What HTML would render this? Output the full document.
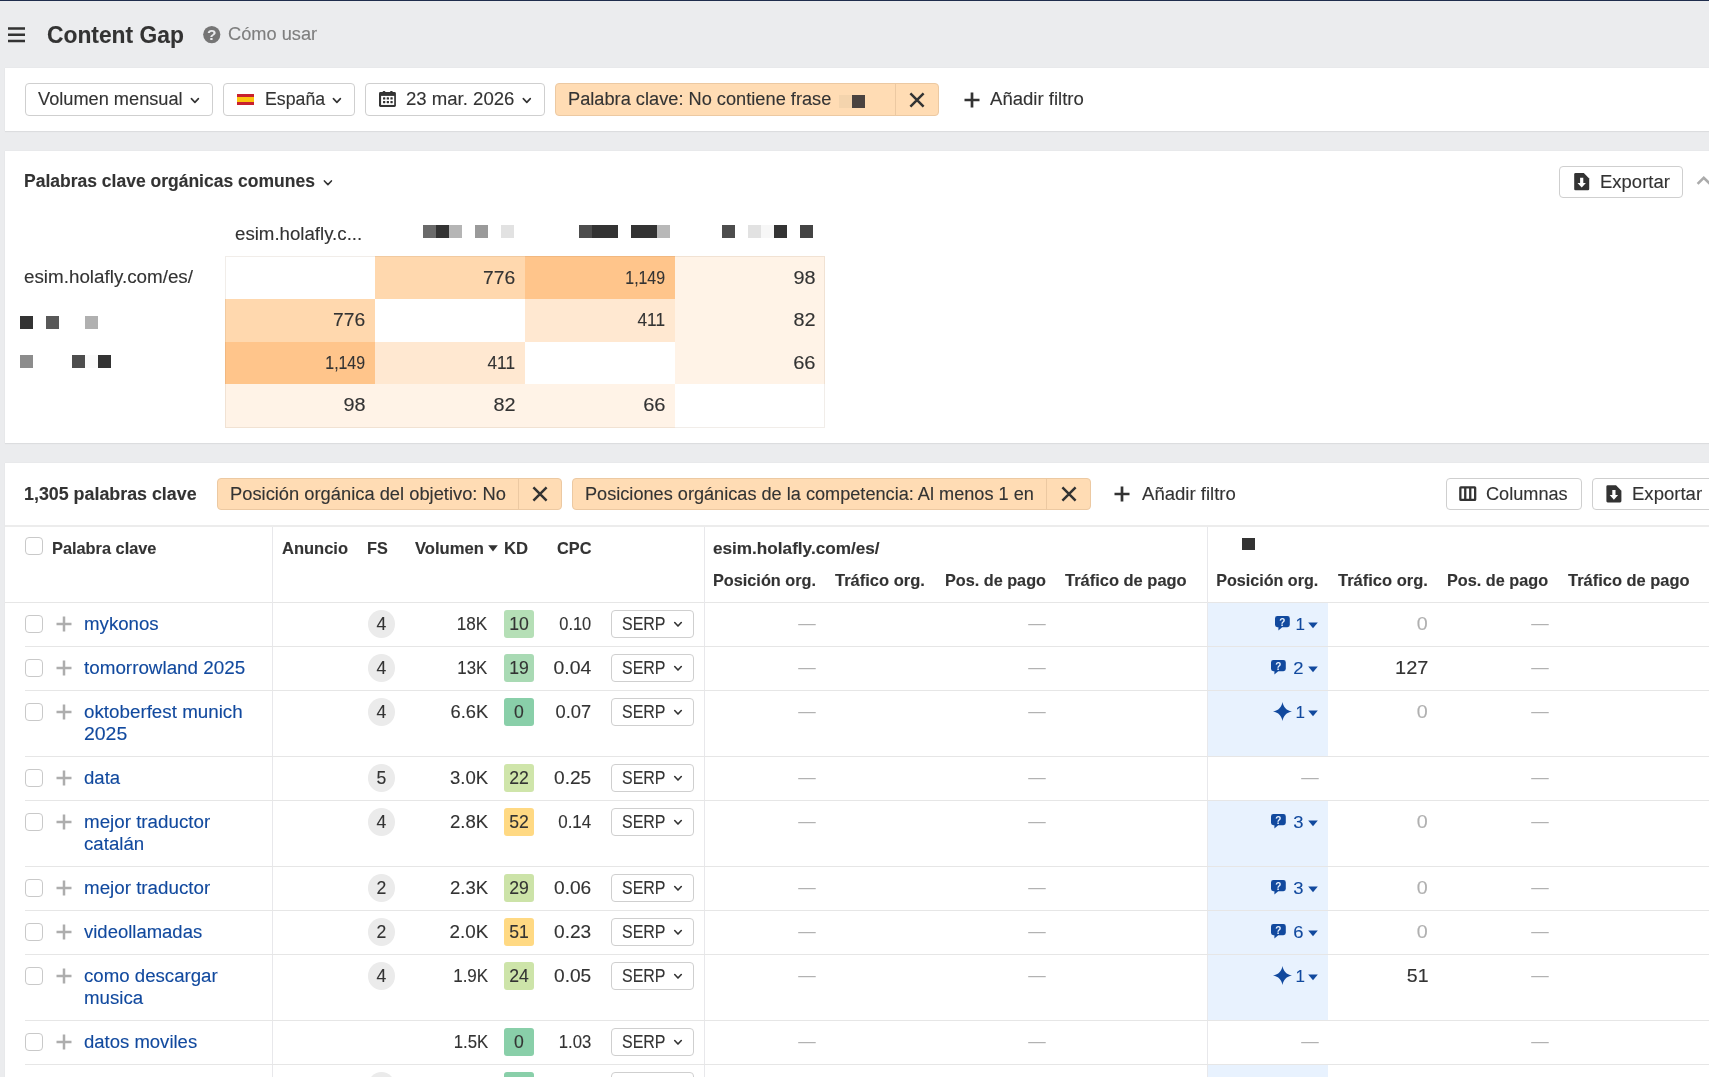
<!DOCTYPE html><html lang="es"><head><meta charset="utf-8"><title>Content Gap</title><style>html,body{margin:0;padding:0}body{width:1709px;height:1077px;overflow:hidden;position:relative;background:#ebecee;font-family:'Liberation Sans', sans-serif;}.t{position:absolute;white-space:nowrap;line-height:1;-webkit-text-stroke:0.12px currentColor;}#root{position:absolute;left:0;top:0;width:1709px;height:1077px;will-change:transform;}</style></head><body><div id="root">
<div style="position:absolute;left:0px;top:0px;width:1709px;height:1px;background:#1f2d4d;"></div>
<svg style="position:absolute;left:8px;top:26px" width="17" height="18" viewBox="0 0 17 18"><path d="M0 2.5 H17 M0 8.7 H17 M0 15 H17" stroke="#333" stroke-width="2.6" fill="none"/></svg>
<svg style="position:absolute;left:203px;top:26px" width="18" height="18" viewBox="0 0 18 18"><circle cx="8.75" cy="8.6" r="8.6" fill="#757575"/><text x="8.75" y="14.3" font-family="Liberation Sans, sans-serif" font-weight="700" font-size="15.5" fill="#ebecee" text-anchor="middle">?</text></svg>
<div style="position:absolute;left:5px;top:68px;width:1704px;height:63px;background:#fff;box-shadow:0 1px 1px rgba(0,0,0,0.055),0 0 1px rgba(0,0,0,0.07)"></div>
<div style="position:absolute;left:25px;top:83px;width:188px;height:33px;box-sizing:border-box;background:#fff;border:1px solid #cfcfcf;border-radius:4px"></div>
<svg style="position:absolute;left:188px;top:95px" width="12" height="10" viewBox="0 0 12 10"><path d="M3.40 3.65 L6.90 7.35 L10.40 3.65" fill="none" stroke="#333" stroke-width="1.6" stroke-linecap="round" stroke-linejoin="round"/></svg>
<div style="position:absolute;left:223px;top:83px;width:132px;height:33px;box-sizing:border-box;background:#fff;border:1px solid #cfcfcf;border-radius:4px"></div>
<div style="position:absolute;left:237px;top:94px;width:17px;height:3px;background:#c8202f;"></div>
<div style="position:absolute;left:237px;top:97px;width:17px;height:5px;background:#fbc40f;"></div>
<div style="position:absolute;left:237px;top:102px;width:17px;height:3px;background:#c8202f;"></div>
<svg style="position:absolute;left:330px;top:95px" width="12" height="10" viewBox="0 0 12 10"><path d="M3.40 3.65 L6.90 7.35 L10.40 3.65" fill="none" stroke="#333" stroke-width="1.6" stroke-linecap="round" stroke-linejoin="round"/></svg>
<div style="position:absolute;left:365px;top:83px;width:180px;height:33px;box-sizing:border-box;background:#fff;border:1px solid #cfcfcf;border-radius:4px"></div>
<svg style="position:absolute;left:379px;top:91px" width="17" height="17" viewBox="0 0 17 17"><path d="M1.4 1 H15.5 Q16.9 1 16.9 2.4 V14.5 Q16.9 15.9 15.5 15.9 H1.4 Q0 15.9 0 14.5 V2.4 Q0 1 1.4 1 Z" fill="#333"/><rect x="3.7" y="0" width="2.6" height="2" rx="0.8" fill="#333"/><rect x="11.1" y="0" width="2.6" height="2" rx="0.8" fill="#333"/><rect x="2.1" y="4.9" width="13.1" height="9.05" fill="#fff"/><g fill="#333"><rect x="4" y="6.3" width="2.3" height="2.3" rx="0.4"/><rect x="7.7" y="6.3" width="2.3" height="2.3" rx="0.4"/><rect x="11.4" y="6.3" width="2.3" height="2.3" rx="0.4"/><rect x="4" y="9.9" width="2.3" height="2.3" rx="0.4"/><rect x="7.7" y="9.9" width="2.3" height="2.3" rx="0.4"/><rect x="11.4" y="9.9" width="2.3" height="2.3" rx="0.4"/></g></svg>
<svg style="position:absolute;left:520px;top:95px" width="12" height="10" viewBox="0 0 12 10"><path d="M3.30 3.65 L6.80 7.35 L10.30 3.65" fill="none" stroke="#333" stroke-width="1.6" stroke-linecap="round" stroke-linejoin="round"/></svg>
<div style="position:absolute;left:555px;top:83px;width:384px;height:33px;box-sizing:border-box;background:#ffdcb4;border:1px solid #ecc9a2;border-radius:4px"></div>
<div style="position:absolute;left:895px;top:84px;width:1px;height:31px;background:#ecc9a2;"></div>
<div style="position:absolute;left:839px;top:94.5px;width:13px;height:13px;background:#f4d4ad;"></div>
<div style="position:absolute;left:852px;top:94.5px;width:13px;height:13px;background:#4a4340;"></div>
<svg style="position:absolute;left:907.8px;top:90.8px" width="18" height="18" viewBox="0 0 18 18"><path d="M2.4000000000000004 2.4000000000000004 L15.6 15.6 M15.6 2.4000000000000004 L2.4000000000000004 15.6" stroke="#333" stroke-width="2.5" stroke-linecap="butt" fill="none"/></svg>
<svg style="position:absolute;left:961.5px;top:89.5px" width="20" height="20" viewBox="0 0 20 20"><path d="M2.5 10 L17.5 10 M10 2.5 L10 17.5" stroke="#333" stroke-width="2.7" fill="none"/></svg>
<div style="position:absolute;left:5px;top:151px;width:1704px;height:292px;background:#fff;box-shadow:0 1px 1px rgba(0,0,0,0.055),0 0 1px rgba(0,0,0,0.07)"></div>
<svg style="position:absolute;left:321px;top:177px" width="12" height="10" viewBox="0 0 12 10"><path d="M3.40 3.95 L6.90 7.65 L10.40 3.95" fill="none" stroke="#333" stroke-width="1.6" stroke-linecap="round" stroke-linejoin="round"/></svg>
<div style="position:absolute;left:1559px;top:166px;width:124px;height:32px;box-sizing:border-box;background:#fff;border:1px solid #cfcfcf;border-radius:4px"></div>
<svg style="position:absolute;left:1574px;top:173px" width="17" height="19" viewBox="0 0 17 19"><g transform="translate(0.20,0.10)"><path d="M1.3 0 H9.6 L15 5.4 V15.8 Q15 17.1 13.7 17.1 H1.3 Q0 17.1 0 15.8 V1.3 Q0 0 1.3 0 Z" fill="#333"/><path d="M5.9 4.6 H9.1 V9.8 H11.7 L7.5 14.4 L3.3 9.8 H5.9 Z" fill="#fff"/></g></svg>
<svg style="position:absolute;left:1694px;top:174px" width="15" height="14" viewBox="0 0 15 14"><path d="M3.6 9.9 L9.75 3.8 L16 9.9" fill="none" stroke="#ababab" stroke-width="2.6"/></svg>
<div style="position:absolute;left:423px;top:225px;width:13px;height:13px;background:#6a6a6a;"></div>
<div style="position:absolute;left:436px;top:225px;width:13px;height:13px;background:#333;"></div>
<div style="position:absolute;left:449px;top:225px;width:13px;height:13px;background:#b5b5b5;"></div>
<div style="position:absolute;left:475px;top:225px;width:13px;height:13px;background:#9a9a9a;"></div>
<div style="position:absolute;left:501px;top:225px;width:13px;height:13px;background:#e2e2e2;"></div>
<div style="position:absolute;left:579px;top:225px;width:13px;height:13px;background:#4d4d4d;"></div>
<div style="position:absolute;left:592px;top:225px;width:13px;height:13px;background:#333;"></div>
<div style="position:absolute;left:605px;top:225px;width:13px;height:13px;background:#333;"></div>
<div style="position:absolute;left:631px;top:225px;width:13px;height:13px;background:#333;"></div>
<div style="position:absolute;left:644px;top:225px;width:13px;height:13px;background:#333;"></div>
<div style="position:absolute;left:657px;top:225px;width:13px;height:13px;background:#b8b8b8;"></div>
<div style="position:absolute;left:722px;top:225px;width:13px;height:13px;background:#4d4d4d;"></div>
<div style="position:absolute;left:748px;top:225px;width:13px;height:13px;background:#e2e2e2;"></div>
<div style="position:absolute;left:761px;top:225px;width:13px;height:13px;background:#f7f7f7;"></div>
<div style="position:absolute;left:774px;top:225px;width:13px;height:13px;background:#333;"></div>
<div style="position:absolute;left:800px;top:225px;width:13px;height:13px;background:#444;"></div>
<div style="position:absolute;left:20px;top:316px;width:13px;height:13px;background:#333;"></div>
<div style="position:absolute;left:46px;top:316px;width:13px;height:13px;background:#595959;"></div>
<div style="position:absolute;left:85px;top:316px;width:13px;height:13px;background:#b0b0b0;"></div>
<div style="position:absolute;left:20px;top:355px;width:13px;height:13px;background:#8c8c8c;"></div>
<div style="position:absolute;left:72px;top:355px;width:13px;height:13px;background:#4d4d4d;"></div>
<div style="position:absolute;left:85px;top:355px;width:13px;height:13px;background:#fafafa;"></div>
<div style="position:absolute;left:98px;top:355px;width:13px;height:13px;background:#333;"></div>
<div style="position:absolute;left:375px;top:256px;width:150px;height:43px;background:#ffd8ae;"></div>
<div style="position:absolute;left:525px;top:256px;width:150px;height:43px;background:#ffc58b;"></div>
<div style="position:absolute;left:675px;top:256px;width:150px;height:43px;background:#fff3e7;"></div>
<div style="position:absolute;left:225px;top:299px;width:150px;height:43px;background:#ffd8ae;"></div>
<div style="position:absolute;left:525px;top:299px;width:150px;height:43px;background:#ffe8d1;"></div>
<div style="position:absolute;left:675px;top:299px;width:150px;height:43px;background:#fff3e7;"></div>
<div style="position:absolute;left:225px;top:342px;width:150px;height:42px;background:#ffc58b;"></div>
<div style="position:absolute;left:375px;top:342px;width:150px;height:42px;background:#ffe8d1;"></div>
<div style="position:absolute;left:675px;top:342px;width:150px;height:42px;background:#fff3e7;"></div>
<div style="position:absolute;left:225px;top:384px;width:150px;height:43.5px;background:#fff3e7;"></div>
<div style="position:absolute;left:375px;top:384px;width:150px;height:43.5px;background:#fff3e7;"></div>
<div style="position:absolute;left:525px;top:384px;width:150px;height:43.5px;background:#fff3e7;"></div>
<div style="position:absolute;left:225px;top:256px;width:600px;height:171.5px;background:transparent;box-sizing:border-box;border:1px solid rgba(120,80,40,0.10)"></div>
<div style="position:absolute;left:5px;top:463px;width:1704px;height:614px;background:#fff;box-shadow:0 0 1px rgba(0,0,0,0.08)"></div>
<div style="position:absolute;left:217px;top:478px;width:345px;height:32px;box-sizing:border-box;background:#ffdcb4;border:1px solid #ecc9a2;border-radius:4px"></div>
<div style="position:absolute;left:518px;top:479px;width:1px;height:30px;background:#ecc9a2;"></div>
<svg style="position:absolute;left:531px;top:485px" width="18" height="18" viewBox="0 0 18 18"><path d="M2.4000000000000004 2.4000000000000004 L15.6 15.6 M15.6 2.4000000000000004 L2.4000000000000004 15.6" stroke="#333" stroke-width="2.5" stroke-linecap="butt" fill="none"/></svg>
<div style="position:absolute;left:572px;top:478px;width:519px;height:32px;box-sizing:border-box;background:#ffdcb4;border:1px solid #ecc9a2;border-radius:4px"></div>
<div style="position:absolute;left:1046px;top:479px;width:1px;height:30px;background:#ecc9a2;"></div>
<svg style="position:absolute;left:1059.6px;top:485px" width="18" height="18" viewBox="0 0 18 18"><path d="M2.4000000000000004 2.4000000000000004 L15.6 15.6 M15.6 2.4000000000000004 L2.4000000000000004 15.6" stroke="#333" stroke-width="2.5" stroke-linecap="butt" fill="none"/></svg>
<svg style="position:absolute;left:1112.3px;top:483.8px" width="20" height="20" viewBox="0 0 20 20"><path d="M2.5 10 L17.5 10 M10 2.5 L10 17.5" stroke="#333" stroke-width="2.7" fill="none"/></svg>
<div style="position:absolute;left:1446px;top:478px;width:136px;height:32px;box-sizing:border-box;background:#fff;border:1px solid #cfcfcf;border-radius:4px"></div>
<svg style="position:absolute;left:1459px;top:486px" width="18" height="16" viewBox="0 0 18 16"><rect x="1.35" y="1.35" width="14.8" height="12.6" rx="0.5" fill="none" stroke="#333" stroke-width="2.3"/><path d="M6.25 1 V14.5 M11.25 1 V14.5" stroke="#333" stroke-width="2.3"/></svg>
<div style="position:absolute;left:1592px;top:478px;width:130px;height:32px;box-sizing:border-box;background:#fff;border:1px solid #cfcfcf;border-radius:4px"></div>
<svg style="position:absolute;left:1606px;top:485px" width="17" height="19" viewBox="0 0 17 19"><g transform="translate(0.40,0.30)"><path d="M1.3 0 H9.6 L15 5.4 V15.8 Q15 17.1 13.7 17.1 H1.3 Q0 17.1 0 15.8 V1.3 Q0 0 1.3 0 Z" fill="#333"/><path d="M5.9 4.6 H9.1 V9.8 H11.7 L7.5 14.4 L3.3 9.8 H5.9 Z" fill="#fff"/></g></svg>
<div style="position:absolute;left:5px;top:525px;width:1704px;height:2px;background:#ececec;"></div>
<div style="position:absolute;left:5px;top:602px;width:1704px;height:1px;background:#e6e6e6;"></div>
<div style="position:absolute;left:272px;top:527px;width:1px;height:550px;background:#e8e8eb;"></div>
<div style="position:absolute;left:704px;top:527px;width:1px;height:550px;background:#e8e8eb;"></div>
<div style="position:absolute;left:1207px;top:527px;width:1px;height:550px;background:#e8e8eb;"></div>
<div style="position:absolute;left:25px;top:536.5px;width:18px;height:18px;box-sizing:border-box;background:#fff;border:1px solid #c9c9c9;border-radius:4px"></div>
<svg style="position:absolute;left:488px;top:544px" width="10" height="9" viewBox="0 0 10 9"><path d="M0.2 1.2 H9.8 L5 7.4 Z" fill="#333"/></svg>
<div style="position:absolute;left:1242px;top:538.4px;width:13px;height:11.5px;background:#333;"></div>
<div style="position:absolute;left:1208px;top:603px;width:120px;height:44px;background:#e8f2fe;"></div>
<div style="position:absolute;left:25px;top:646px;width:1684px;height:1px;background:#e6e6e6;"></div>
<div style="position:absolute;left:25px;top:615.0px;width:18px;height:18px;box-sizing:border-box;background:#fff;border:1px solid #c9c9c9;border-radius:4px"></div>
<svg style="position:absolute;left:53.5px;top:614.3px" width="20" height="20" viewBox="0 0 20 20"><path d="M2.5 10 L17.5 10 M10 2.5 L10 17.5" stroke="#adadad" stroke-width="2.5" fill="none"/></svg>
<div style="position:absolute;left:368px;top:610.2px;width:27px;height:27.5px;border-radius:50%;background:#ebebeb"></div>
<div style="position:absolute;left:504px;top:610px;width:30px;height:27.8px;border-radius:3px;background:#b5dfb6"></div>
<div style="position:absolute;left:611px;top:610.2px;width:83px;height:27.6px;box-sizing:border-box;background:#fff;border:1px solid #cfcfcf;border-radius:4px"></div>
<svg style="position:absolute;left:672px;top:619px" width="12" height="10" viewBox="0 0 12 10"><path d="M2.71 3.56 L6.00 7.04 L9.29 3.56" fill="none" stroke="#333" stroke-width="1.6" stroke-linecap="round" stroke-linejoin="round"/></svg>
<svg style="position:absolute;left:1308.2px;top:622.4px" width="10" height="7" viewBox="0 0 10 7"><path d="M0.2 0.5 H9.8 L5 6.2 Z" fill="#11499e"/></svg>
<svg style="position:absolute;left:1275.3px;top:615.8px" width="15" height="15" viewBox="0 0 15 15"><path d="M2.4 0 H12.4 Q14.8 0 14.8 2.4 V8.8 Q14.8 11.2 12.4 11.2 H7.2 L3.4 14.4 V11.2 H2.4 Q0 11.2 0 8.8 V2.4 Q0 0 2.4 0 Z" fill="#11499e"/><text x="7.4" y="9.7" font-family="Liberation Sans, sans-serif" font-weight="700" font-size="10" fill="#e8f2fe" text-anchor="middle">?</text></svg>
<div style="position:absolute;left:1208px;top:647px;width:120px;height:44px;background:#e8f2fe;"></div>
<div style="position:absolute;left:25px;top:690px;width:1684px;height:1px;background:#e6e6e6;"></div>
<div style="position:absolute;left:25px;top:659.0px;width:18px;height:18px;box-sizing:border-box;background:#fff;border:1px solid #c9c9c9;border-radius:4px"></div>
<svg style="position:absolute;left:53.5px;top:658.3px" width="20" height="20" viewBox="0 0 20 20"><path d="M2.5 10 L17.5 10 M10 2.5 L10 17.5" stroke="#adadad" stroke-width="2.5" fill="none"/></svg>
<div style="position:absolute;left:368px;top:654.2px;width:27px;height:27.5px;border-radius:50%;background:#ebebeb"></div>
<div style="position:absolute;left:504px;top:654px;width:30px;height:27.8px;border-radius:3px;background:#a9dab4"></div>
<div style="position:absolute;left:611px;top:654.2px;width:83px;height:27.6px;box-sizing:border-box;background:#fff;border:1px solid #cfcfcf;border-radius:4px"></div>
<svg style="position:absolute;left:672px;top:663px" width="12" height="10" viewBox="0 0 12 10"><path d="M2.71 3.56 L6.00 7.04 L9.29 3.56" fill="none" stroke="#333" stroke-width="1.6" stroke-linecap="round" stroke-linejoin="round"/></svg>
<svg style="position:absolute;left:1308.2px;top:666.4px" width="10" height="7" viewBox="0 0 10 7"><path d="M0.2 0.5 H9.8 L5 6.2 Z" fill="#11499e"/></svg>
<svg style="position:absolute;left:1271.3999999999999px;top:659.8px" width="15" height="15" viewBox="0 0 15 15"><path d="M2.4 0 H12.4 Q14.8 0 14.8 2.4 V8.8 Q14.8 11.2 12.4 11.2 H7.2 L3.4 14.4 V11.2 H2.4 Q0 11.2 0 8.8 V2.4 Q0 0 2.4 0 Z" fill="#11499e"/><text x="7.4" y="9.7" font-family="Liberation Sans, sans-serif" font-weight="700" font-size="10" fill="#e8f2fe" text-anchor="middle">?</text></svg>
<div style="position:absolute;left:1208px;top:691px;width:120px;height:66px;background:#e8f2fe;"></div>
<div style="position:absolute;left:25px;top:756px;width:1684px;height:1px;background:#e6e6e6;"></div>
<div style="position:absolute;left:25px;top:703.0px;width:18px;height:18px;box-sizing:border-box;background:#fff;border:1px solid #c9c9c9;border-radius:4px"></div>
<svg style="position:absolute;left:53.5px;top:702.3px" width="20" height="20" viewBox="0 0 20 20"><path d="M2.5 10 L17.5 10 M10 2.5 L10 17.5" stroke="#adadad" stroke-width="2.5" fill="none"/></svg>
<div style="position:absolute;left:368px;top:698.2px;width:27px;height:27.5px;border-radius:50%;background:#ebebeb"></div>
<div style="position:absolute;left:504px;top:698px;width:30px;height:27.8px;border-radius:3px;background:#89cfa9"></div>
<div style="position:absolute;left:611px;top:698.2px;width:83px;height:27.6px;box-sizing:border-box;background:#fff;border:1px solid #cfcfcf;border-radius:4px"></div>
<svg style="position:absolute;left:672px;top:707px" width="12" height="10" viewBox="0 0 12 10"><path d="M2.71 3.56 L6.00 7.04 L9.29 3.56" fill="none" stroke="#333" stroke-width="1.6" stroke-linecap="round" stroke-linejoin="round"/></svg>
<svg style="position:absolute;left:1308.2px;top:710.4px" width="10" height="7" viewBox="0 0 10 7"><path d="M0.2 0.5 H9.8 L5 6.2 Z" fill="#11499e"/></svg>
<svg style="position:absolute;left:1273.3px;top:702.3px" width="19" height="19" viewBox="0 0 18 18"><path d="M9 0 C10 5.2 12.6 7.8 18 9 C12.6 10.2 10 12.8 9 18 C8 12.8 5.4 10.2 0 9 C5.4 7.8 8 5.2 9 0 Z" fill="#11499e"/></svg>
<div style="position:absolute;left:25px;top:800px;width:1684px;height:1px;background:#e6e6e6;"></div>
<div style="position:absolute;left:25px;top:769.0px;width:18px;height:18px;box-sizing:border-box;background:#fff;border:1px solid #c9c9c9;border-radius:4px"></div>
<svg style="position:absolute;left:53.5px;top:768.3px" width="20" height="20" viewBox="0 0 20 20"><path d="M2.5 10 L17.5 10 M10 2.5 L10 17.5" stroke="#adadad" stroke-width="2.5" fill="none"/></svg>
<div style="position:absolute;left:368px;top:764.2px;width:27px;height:27.5px;border-radius:50%;background:#ebebeb"></div>
<div style="position:absolute;left:504px;top:764px;width:30px;height:27.8px;border-radius:3px;background:#cfe5aa"></div>
<div style="position:absolute;left:611px;top:764.2px;width:83px;height:27.6px;box-sizing:border-box;background:#fff;border:1px solid #cfcfcf;border-radius:4px"></div>
<svg style="position:absolute;left:672px;top:773px" width="12" height="10" viewBox="0 0 12 10"><path d="M2.71 3.56 L6.00 7.04 L9.29 3.56" fill="none" stroke="#333" stroke-width="1.6" stroke-linecap="round" stroke-linejoin="round"/></svg>
<div style="position:absolute;left:1208px;top:801px;width:120px;height:66px;background:#e8f2fe;"></div>
<div style="position:absolute;left:25px;top:866px;width:1684px;height:1px;background:#e6e6e6;"></div>
<div style="position:absolute;left:25px;top:813.0px;width:18px;height:18px;box-sizing:border-box;background:#fff;border:1px solid #c9c9c9;border-radius:4px"></div>
<svg style="position:absolute;left:53.5px;top:812.3px" width="20" height="20" viewBox="0 0 20 20"><path d="M2.5 10 L17.5 10 M10 2.5 L10 17.5" stroke="#adadad" stroke-width="2.5" fill="none"/></svg>
<div style="position:absolute;left:368px;top:808.2px;width:27px;height:27.5px;border-radius:50%;background:#ebebeb"></div>
<div style="position:absolute;left:504px;top:808px;width:30px;height:27.8px;border-radius:3px;background:#ffd983"></div>
<div style="position:absolute;left:611px;top:808.2px;width:83px;height:27.6px;box-sizing:border-box;background:#fff;border:1px solid #cfcfcf;border-radius:4px"></div>
<svg style="position:absolute;left:672px;top:817px" width="12" height="10" viewBox="0 0 12 10"><path d="M2.71 3.56 L6.00 7.04 L9.29 3.56" fill="none" stroke="#333" stroke-width="1.6" stroke-linecap="round" stroke-linejoin="round"/></svg>
<svg style="position:absolute;left:1308.2px;top:820.4px" width="10" height="7" viewBox="0 0 10 7"><path d="M0.2 0.5 H9.8 L5 6.2 Z" fill="#11499e"/></svg>
<svg style="position:absolute;left:1271.3999999999999px;top:813.8px" width="15" height="15" viewBox="0 0 15 15"><path d="M2.4 0 H12.4 Q14.8 0 14.8 2.4 V8.8 Q14.8 11.2 12.4 11.2 H7.2 L3.4 14.4 V11.2 H2.4 Q0 11.2 0 8.8 V2.4 Q0 0 2.4 0 Z" fill="#11499e"/><text x="7.4" y="9.7" font-family="Liberation Sans, sans-serif" font-weight="700" font-size="10" fill="#e8f2fe" text-anchor="middle">?</text></svg>
<div style="position:absolute;left:1208px;top:867px;width:120px;height:44px;background:#e8f2fe;"></div>
<div style="position:absolute;left:25px;top:910px;width:1684px;height:1px;background:#e6e6e6;"></div>
<div style="position:absolute;left:25px;top:879.0px;width:18px;height:18px;box-sizing:border-box;background:#fff;border:1px solid #c9c9c9;border-radius:4px"></div>
<svg style="position:absolute;left:53.5px;top:878.3px" width="20" height="20" viewBox="0 0 20 20"><path d="M2.5 10 L17.5 10 M10 2.5 L10 17.5" stroke="#adadad" stroke-width="2.5" fill="none"/></svg>
<div style="position:absolute;left:368px;top:874.2px;width:27px;height:27.5px;border-radius:50%;background:#ebebeb"></div>
<div style="position:absolute;left:504px;top:874px;width:30px;height:27.8px;border-radius:3px;background:#cce3a8"></div>
<div style="position:absolute;left:611px;top:874.2px;width:83px;height:27.6px;box-sizing:border-box;background:#fff;border:1px solid #cfcfcf;border-radius:4px"></div>
<svg style="position:absolute;left:672px;top:883px" width="12" height="10" viewBox="0 0 12 10"><path d="M2.71 3.56 L6.00 7.04 L9.29 3.56" fill="none" stroke="#333" stroke-width="1.6" stroke-linecap="round" stroke-linejoin="round"/></svg>
<svg style="position:absolute;left:1308.2px;top:886.4px" width="10" height="7" viewBox="0 0 10 7"><path d="M0.2 0.5 H9.8 L5 6.2 Z" fill="#11499e"/></svg>
<svg style="position:absolute;left:1271.3999999999999px;top:879.8px" width="15" height="15" viewBox="0 0 15 15"><path d="M2.4 0 H12.4 Q14.8 0 14.8 2.4 V8.8 Q14.8 11.2 12.4 11.2 H7.2 L3.4 14.4 V11.2 H2.4 Q0 11.2 0 8.8 V2.4 Q0 0 2.4 0 Z" fill="#11499e"/><text x="7.4" y="9.7" font-family="Liberation Sans, sans-serif" font-weight="700" font-size="10" fill="#e8f2fe" text-anchor="middle">?</text></svg>
<div style="position:absolute;left:1208px;top:911px;width:120px;height:44px;background:#e8f2fe;"></div>
<div style="position:absolute;left:25px;top:954px;width:1684px;height:1px;background:#e6e6e6;"></div>
<div style="position:absolute;left:25px;top:923.0px;width:18px;height:18px;box-sizing:border-box;background:#fff;border:1px solid #c9c9c9;border-radius:4px"></div>
<svg style="position:absolute;left:53.5px;top:922.3px" width="20" height="20" viewBox="0 0 20 20"><path d="M2.5 10 L17.5 10 M10 2.5 L10 17.5" stroke="#adadad" stroke-width="2.5" fill="none"/></svg>
<div style="position:absolute;left:368px;top:918.2px;width:27px;height:27.5px;border-radius:50%;background:#ebebeb"></div>
<div style="position:absolute;left:504px;top:918px;width:30px;height:27.8px;border-radius:3px;background:#ffd983"></div>
<div style="position:absolute;left:611px;top:918.2px;width:83px;height:27.6px;box-sizing:border-box;background:#fff;border:1px solid #cfcfcf;border-radius:4px"></div>
<svg style="position:absolute;left:672px;top:927px" width="12" height="10" viewBox="0 0 12 10"><path d="M2.71 3.56 L6.00 7.04 L9.29 3.56" fill="none" stroke="#333" stroke-width="1.6" stroke-linecap="round" stroke-linejoin="round"/></svg>
<svg style="position:absolute;left:1308.2px;top:930.4px" width="10" height="7" viewBox="0 0 10 7"><path d="M0.2 0.5 H9.8 L5 6.2 Z" fill="#11499e"/></svg>
<svg style="position:absolute;left:1271.3999999999999px;top:923.8px" width="15" height="15" viewBox="0 0 15 15"><path d="M2.4 0 H12.4 Q14.8 0 14.8 2.4 V8.8 Q14.8 11.2 12.4 11.2 H7.2 L3.4 14.4 V11.2 H2.4 Q0 11.2 0 8.8 V2.4 Q0 0 2.4 0 Z" fill="#11499e"/><text x="7.4" y="9.7" font-family="Liberation Sans, sans-serif" font-weight="700" font-size="10" fill="#e8f2fe" text-anchor="middle">?</text></svg>
<div style="position:absolute;left:1208px;top:955px;width:120px;height:66px;background:#e8f2fe;"></div>
<div style="position:absolute;left:25px;top:1020px;width:1684px;height:1px;background:#e6e6e6;"></div>
<div style="position:absolute;left:25px;top:967.0px;width:18px;height:18px;box-sizing:border-box;background:#fff;border:1px solid #c9c9c9;border-radius:4px"></div>
<svg style="position:absolute;left:53.5px;top:966.3px" width="20" height="20" viewBox="0 0 20 20"><path d="M2.5 10 L17.5 10 M10 2.5 L10 17.5" stroke="#adadad" stroke-width="2.5" fill="none"/></svg>
<div style="position:absolute;left:368px;top:962.2px;width:27px;height:27.5px;border-radius:50%;background:#ebebeb"></div>
<div style="position:absolute;left:504px;top:962px;width:30px;height:27.8px;border-radius:3px;background:#cde4a9"></div>
<div style="position:absolute;left:611px;top:962.2px;width:83px;height:27.6px;box-sizing:border-box;background:#fff;border:1px solid #cfcfcf;border-radius:4px"></div>
<svg style="position:absolute;left:672px;top:971px" width="12" height="10" viewBox="0 0 12 10"><path d="M2.71 3.56 L6.00 7.04 L9.29 3.56" fill="none" stroke="#333" stroke-width="1.6" stroke-linecap="round" stroke-linejoin="round"/></svg>
<svg style="position:absolute;left:1308.2px;top:974.4px" width="10" height="7" viewBox="0 0 10 7"><path d="M0.2 0.5 H9.8 L5 6.2 Z" fill="#11499e"/></svg>
<svg style="position:absolute;left:1273.3px;top:966.3px" width="19" height="19" viewBox="0 0 18 18"><path d="M9 0 C10 5.2 12.6 7.8 18 9 C12.6 10.2 10 12.8 9 18 C8 12.8 5.4 10.2 0 9 C5.4 7.8 8 5.2 9 0 Z" fill="#11499e"/></svg>
<div style="position:absolute;left:25px;top:1064px;width:1684px;height:1px;background:#e6e6e6;"></div>
<div style="position:absolute;left:25px;top:1033.0px;width:18px;height:18px;box-sizing:border-box;background:#fff;border:1px solid #c9c9c9;border-radius:4px"></div>
<svg style="position:absolute;left:53.5px;top:1032.3px" width="20" height="20" viewBox="0 0 20 20"><path d="M2.5 10 L17.5 10 M10 2.5 L10 17.5" stroke="#adadad" stroke-width="2.5" fill="none"/></svg>
<div style="position:absolute;left:504px;top:1028px;width:30px;height:27.8px;border-radius:3px;background:#89cfa9"></div>
<div style="position:absolute;left:611px;top:1028.2px;width:83px;height:27.6px;box-sizing:border-box;background:#fff;border:1px solid #cfcfcf;border-radius:4px"></div>
<svg style="position:absolute;left:672px;top:1037px" width="12" height="10" viewBox="0 0 12 10"><path d="M2.71 3.56 L6.00 7.04 L9.29 3.56" fill="none" stroke="#333" stroke-width="1.6" stroke-linecap="round" stroke-linejoin="round"/></svg>
<div style="position:absolute;left:1208px;top:1065px;width:120px;height:44px;background:#e8f2fe;"></div>
<div style="position:absolute;left:25px;top:1077.0px;width:18px;height:18px;box-sizing:border-box;background:#fff;border:1px solid #c9c9c9;border-radius:4px"></div>
<svg style="position:absolute;left:53.5px;top:1076.3px" width="20" height="20" viewBox="0 0 20 20"><path d="M2.5 10 L17.5 10 M10 2.5 L10 17.5" stroke="#adadad" stroke-width="2.5" fill="none"/></svg>
<div style="position:absolute;left:368px;top:1072.2px;width:27px;height:27.5px;border-radius:50%;background:#ebebeb"></div>
<div style="position:absolute;left:504px;top:1072px;width:30px;height:27.8px;border-radius:3px;background:#89cfa9"></div>
<div style="position:absolute;left:611px;top:1072.2px;width:83px;height:27.6px;box-sizing:border-box;background:#fff;border:1px solid #cfcfcf;border-radius:4px"></div>
<svg style="position:absolute;left:672px;top:1081px" width="12" height="10" viewBox="0 0 12 10"><path d="M2.71 3.56 L6.00 7.04 L9.29 3.56" fill="none" stroke="#333" stroke-width="1.6" stroke-linecap="round" stroke-linejoin="round"/></svg>
<span class="t" style="left:47.17px;top:23.78px;font-size:23.3px;color:#333333;font-weight:700;transform:scaleX(0.9791);transform-origin:left center;">Content Gap</span>
<span class="t" style="left:228.18px;top:25.60px;font-size:17.6px;color:#7e7e7e;transform:scaleX(1.0360);transform-origin:left center;">Cómo usar</span>
<span class="t" style="left:38.48px;top:90.60px;font-size:17.6px;color:#333333;transform:scaleX(1.0342);transform-origin:left center;">Volumen mensual</span>
<span class="t" style="left:264.70px;top:90.60px;font-size:17.6px;color:#333333;transform:scaleX(1.0071);transform-origin:left center;">España</span>
<span class="t" style="left:406.16px;top:90.60px;font-size:17.6px;color:#333333;transform:scaleX(1.0552);transform-origin:left center;">23 mar. 2026</span>
<span class="t" style="left:568.18px;top:90.60px;font-size:17.6px;color:#333333;transform:scaleX(1.0356);transform-origin:left center;">Palabra clave: No contiene frase</span>
<span class="t" style="left:990.36px;top:90.60px;font-size:17.6px;color:#333333;transform:scaleX(1.0549);transform-origin:left center;">Añadir filtro</span>
<span class="t" style="left:24.41px;top:173.10px;font-size:17.6px;color:#333333;font-weight:700;transform:scaleX(0.9948);transform-origin:left center;">Palabras clave orgánicas comunes</span>
<span class="t" style="left:1599.87px;top:174.10px;font-size:17.6px;color:#333333;transform:scaleX(1.0506);transform-origin:left center;">Exportar</span>
<span class="t" style="left:234.86px;top:225.60px;font-size:17.6px;color:#333333;transform:scaleX(1.0604);transform-origin:left center;">esim.holafly.c...</span>
<span class="t" style="left:24.35px;top:269.40px;font-size:17.6px;color:#333333;transform:scaleX(1.0690);transform-origin:left center;">esim.holafly.com/es/</span>
<span class="t" style="left:485.81px;top:269.60px;font-size:17.6px;color:#333333;transform:scaleX(1.0981);transform-origin:right center;">776</span>
<span class="t" style="left:620.98px;top:269.60px;font-size:17.6px;color:#333333;transform:scaleX(0.9023);transform-origin:right center;">1,149</span>
<span class="t" style="left:795.62px;top:269.60px;font-size:17.6px;color:#333333;transform:scaleX(1.1281);transform-origin:right center;">98</span>
<span class="t" style="left:335.81px;top:311.90px;font-size:17.6px;color:#333333;transform:scaleX(1.0981);transform-origin:right center;">776</span>
<span class="t" style="left:637.02px;top:311.90px;font-size:17.6px;color:#333333;transform:scaleX(0.9819);transform-origin:right center;">411</span>
<span class="t" style="left:795.62px;top:311.90px;font-size:17.6px;color:#333333;transform:scaleX(1.1281);transform-origin:right center;">82</span>
<span class="t" style="left:320.98px;top:354.60px;font-size:17.6px;color:#333333;transform:scaleX(0.9023);transform-origin:right center;">1,149</span>
<span class="t" style="left:487.02px;top:354.60px;font-size:17.6px;color:#333333;transform:scaleX(0.9819);transform-origin:right center;">411</span>
<span class="t" style="left:795.63px;top:354.60px;font-size:17.6px;color:#333333;transform:scaleX(1.1448);transform-origin:right center;">66</span>
<span class="t" style="left:345.62px;top:396.90px;font-size:17.6px;color:#333333;transform:scaleX(1.1281);transform-origin:right center;">98</span>
<span class="t" style="left:495.62px;top:396.90px;font-size:17.6px;color:#333333;transform:scaleX(1.1281);transform-origin:right center;">82</span>
<span class="t" style="left:645.63px;top:396.90px;font-size:17.6px;color:#333333;transform:scaleX(1.1448);transform-origin:right center;">66</span>
<span class="t" style="left:24.40px;top:485.90px;font-size:17.6px;color:#333333;font-weight:700;transform:scaleX(1.0141);transform-origin:left center;">1,305 palabras clave</span>
<span class="t" style="left:230.18px;top:485.90px;font-size:17.6px;color:#333333;transform:scaleX(1.0411);transform-origin:left center;">Posición orgánica del objetivo: No</span>
<span class="t" style="left:585.48px;top:485.90px;font-size:17.6px;color:#333333;transform:scaleX(1.0313);transform-origin:left center;">Posiciones orgánicas de la competencia: Al menos 1 en</span>
<span class="t" style="left:1141.66px;top:485.90px;font-size:17.6px;color:#333333;transform:scaleX(1.0549);transform-origin:left center;">Añadir filtro</span>
<span class="t" style="left:1486.48px;top:485.90px;font-size:17.6px;color:#333333;transform:scaleX(1.0305);transform-origin:left center;">Columnas</span>
<span class="t" style="left:1631.77px;top:485.90px;font-size:17.6px;color:#333333;transform:scaleX(1.0537);transform-origin:left center;">Exportar</span>
<span class="t" style="left:52.26px;top:540.47px;font-size:16.1px;color:#333333;font-weight:700;transform:scaleX(1.0152);transform-origin:left center;">Palabra clave</span>
<span class="t" style="left:282.26px;top:540.47px;font-size:16.1px;color:#333333;font-weight:700;transform:scaleX(1.0250);transform-origin:left center;">Anuncio</span>
<span class="t" style="left:366.97px;top:540.47px;font-size:16.1px;color:#333333;font-weight:700;transform:scaleX(1.0089);transform-origin:left center;">FS</span>
<span class="t" style="left:415.25px;top:540.47px;font-size:16.1px;color:#333333;font-weight:700;transform:scaleX(1.0319);transform-origin:left center;">Volumen</span>
<span class="t" style="left:503.65px;top:540.47px;font-size:16.1px;color:#333333;font-weight:700;transform:scaleX(1.0366);transform-origin:left center;">KD</span>
<span class="t" style="left:556.67px;top:540.47px;font-size:16.1px;color:#333333;font-weight:700;transform:scaleX(1.0143);transform-origin:left center;">CPC</span>
<span class="t" style="left:713.23px;top:540.47px;font-size:16.1px;color:#333333;font-weight:700;transform:scaleX(1.0660);transform-origin:left center;">esim.holafly.com/es/</span>
<span class="t" style="left:713.27px;top:571.97px;font-size:16.1px;color:#333333;font-weight:700;transform:scaleX(1.0099);transform-origin:left center;">Posición org.</span>
<span class="t" style="left:835.26px;top:571.97px;font-size:16.1px;color:#333333;font-weight:700;transform:scaleX(1.0256);transform-origin:left center;">Tráfico org.</span>
<span class="t" style="left:944.57px;top:571.97px;font-size:16.1px;color:#333333;font-weight:700;transform:scaleX(1.0080);transform-origin:left center;">Pos. de pago</span>
<span class="t" style="left:1065.26px;top:571.97px;font-size:16.1px;color:#333333;font-weight:700;transform:scaleX(1.0231);transform-origin:left center;">Tráfico de pago</span>
<span class="t" style="left:1216.28px;top:571.97px;font-size:16.1px;color:#333333;font-weight:700;">Posición org.</span>
<span class="t" style="left:1337.86px;top:571.97px;font-size:16.1px;color:#333333;font-weight:700;transform:scaleX(1.0256);transform-origin:left center;">Tráfico org.</span>
<span class="t" style="left:1447.37px;top:571.97px;font-size:16.1px;color:#333333;font-weight:700;transform:scaleX(1.0090);transform-origin:left center;">Pos. de pago</span>
<span class="t" style="left:1568.06px;top:571.97px;font-size:16.1px;color:#333333;font-weight:700;transform:scaleX(1.0222);transform-origin:left center;">Tráfico de pago</span>
<span class="t" style="left:84.16px;top:616.00px;font-size:17.6px;color:#11499e;transform:scaleX(1.0607);transform-origin:left center;">mykonos</span>
<span class="t" style="left:376.50px;top:616.00px;font-size:17.6px;color:#333333;">4</span>
<span class="t" style="left:456.46px;top:616.00px;font-size:17.6px;color:#333333;transform:scaleX(0.9755);transform-origin:right center;">18K</span>
<span class="t" style="left:509.21px;top:616.00px;font-size:17.6px;color:#333333;">10</span>
<span class="t" style="left:556.99px;top:616.00px;font-size:17.6px;color:#333333;transform:scaleX(0.9337);transform-origin:right center;">0.10</span>
<span class="t" style="left:622.08px;top:616.00px;font-size:17.6px;color:#333333;transform:scaleX(0.9085);transform-origin:left center;">SERP</span>
<span class="t" style="left:797.91px;top:615.30px;font-size:17.6px;color:#b2b2b2;transform:scaleX(0.9890);transform-origin:right center;">—</span>
<span class="t" style="left:1027.91px;top:615.30px;font-size:17.6px;color:#b2b2b2;transform:scaleX(0.9890);transform-origin:right center;">—</span>
<span class="t" style="left:1530.71px;top:615.30px;font-size:17.6px;color:#b2b2b2;transform:scaleX(0.9890);transform-origin:right center;">—</span>
<span class="t" style="left:1295.50px;top:615.81px;font-size:17px;color:#11499e;">1</span>
<span class="t" style="left:1418.29px;top:616.00px;font-size:17.6px;color:#b0b0b0;transform:scaleX(1.1202);transform-origin:right center;">0</span>
<span class="t" style="left:84.15px;top:660.00px;font-size:17.6px;color:#11499e;transform:scaleX(1.0702);transform-origin:left center;">tomorrowland 2025</span>
<span class="t" style="left:376.50px;top:660.00px;font-size:17.6px;color:#333333;">4</span>
<span class="t" style="left:456.45px;top:660.00px;font-size:17.6px;color:#333333;transform:scaleX(0.9587);transform-origin:right center;">13K</span>
<span class="t" style="left:509.21px;top:660.00px;font-size:17.6px;color:#333333;">19</span>
<span class="t" style="left:557.12px;top:660.00px;font-size:17.6px;color:#333333;transform:scaleX(1.1021);transform-origin:right center;">0.04</span>
<span class="t" style="left:622.08px;top:660.00px;font-size:17.6px;color:#333333;transform:scaleX(0.9085);transform-origin:left center;">SERP</span>
<span class="t" style="left:797.91px;top:659.30px;font-size:17.6px;color:#b2b2b2;transform:scaleX(0.9890);transform-origin:right center;">—</span>
<span class="t" style="left:1027.91px;top:659.30px;font-size:17.6px;color:#b2b2b2;transform:scaleX(0.9890);transform-origin:right center;">—</span>
<span class="t" style="left:1530.71px;top:659.30px;font-size:17.6px;color:#b2b2b2;transform:scaleX(0.9890);transform-origin:right center;">—</span>
<span class="t" style="left:1293.66px;top:659.81px;font-size:17px;color:#11499e;transform:scaleX(1.0833);transform-origin:right center;">2</span>
<span class="t" style="left:1398.74px;top:660.00px;font-size:17.6px;color:#333333;transform:scaleX(1.1341);transform-origin:right center;">127</span>
<span class="t" style="left:84.15px;top:704.00px;font-size:17.6px;color:#11499e;transform:scaleX(1.0675);transform-origin:left center;">oktoberfest munich</span>
<span class="t" style="left:84.12px;top:726.00px;font-size:17.6px;color:#11499e;transform:scaleX(1.1050);transform-origin:left center;">2025</span>
<span class="t" style="left:376.50px;top:704.00px;font-size:17.6px;color:#333333;">4</span>
<span class="t" style="left:451.62px;top:704.00px;font-size:17.6px;color:#333333;transform:scaleX(1.0399);transform-origin:right center;">6.6K</span>
<span class="t" style="left:514.10px;top:704.00px;font-size:17.6px;color:#333333;">0</span>
<span class="t" style="left:557.07px;top:704.00px;font-size:17.6px;color:#333333;transform:scaleX(1.0408);transform-origin:right center;">0.07</span>
<span class="t" style="left:622.08px;top:704.00px;font-size:17.6px;color:#333333;transform:scaleX(0.9085);transform-origin:left center;">SERP</span>
<span class="t" style="left:797.91px;top:703.30px;font-size:17.6px;color:#b2b2b2;transform:scaleX(0.9890);transform-origin:right center;">—</span>
<span class="t" style="left:1027.91px;top:703.30px;font-size:17.6px;color:#b2b2b2;transform:scaleX(0.9890);transform-origin:right center;">—</span>
<span class="t" style="left:1530.71px;top:703.30px;font-size:17.6px;color:#b2b2b2;transform:scaleX(0.9890);transform-origin:right center;">—</span>
<span class="t" style="left:1295.50px;top:703.81px;font-size:17px;color:#11499e;">1</span>
<span class="t" style="left:1418.29px;top:704.00px;font-size:17.6px;color:#b0b0b0;transform:scaleX(1.1202);transform-origin:right center;">0</span>
<span class="t" style="left:84.16px;top:770.00px;font-size:17.6px;color:#11499e;transform:scaleX(1.0561);transform-origin:left center;">data</span>
<span class="t" style="left:376.50px;top:770.00px;font-size:17.6px;color:#333333;">5</span>
<span class="t" style="left:451.63px;top:770.00px;font-size:17.6px;color:#333333;transform:scaleX(1.0543);transform-origin:right center;">3.0K</span>
<span class="t" style="left:509.21px;top:770.00px;font-size:17.6px;color:#333333;">22</span>
<span class="t" style="left:557.11px;top:770.00px;font-size:17.6px;color:#333333;transform:scaleX(1.0868);transform-origin:right center;">0.25</span>
<span class="t" style="left:622.08px;top:770.00px;font-size:17.6px;color:#333333;transform:scaleX(0.9085);transform-origin:left center;">SERP</span>
<span class="t" style="left:797.91px;top:769.30px;font-size:17.6px;color:#b2b2b2;transform:scaleX(0.9890);transform-origin:right center;">—</span>
<span class="t" style="left:1027.91px;top:769.30px;font-size:17.6px;color:#b2b2b2;transform:scaleX(0.9890);transform-origin:right center;">—</span>
<span class="t" style="left:1530.71px;top:769.30px;font-size:17.6px;color:#b2b2b2;transform:scaleX(0.9890);transform-origin:right center;">—</span>
<span class="t" style="left:1300.61px;top:769.30px;font-size:17.6px;color:#b2b2b2;transform:scaleX(0.9890);transform-origin:right center;">—</span>
<span class="t" style="left:84.16px;top:814.00px;font-size:17.6px;color:#11499e;transform:scaleX(1.0666);transform-origin:left center;">mejor traductor</span>
<span class="t" style="left:84.16px;top:836.00px;font-size:17.6px;color:#11499e;transform:scaleX(1.0607);transform-origin:left center;">catalán</span>
<span class="t" style="left:376.50px;top:814.00px;font-size:17.6px;color:#333333;">4</span>
<span class="t" style="left:451.63px;top:814.00px;font-size:17.6px;color:#333333;transform:scaleX(1.0543);transform-origin:right center;">2.8K</span>
<span class="t" style="left:509.21px;top:814.00px;font-size:17.6px;color:#333333;">52</span>
<span class="t" style="left:557.01px;top:814.00px;font-size:17.6px;color:#333333;transform:scaleX(0.9643);transform-origin:right center;">0.14</span>
<span class="t" style="left:622.08px;top:814.00px;font-size:17.6px;color:#333333;transform:scaleX(0.9085);transform-origin:left center;">SERP</span>
<span class="t" style="left:797.91px;top:813.30px;font-size:17.6px;color:#b2b2b2;transform:scaleX(0.9890);transform-origin:right center;">—</span>
<span class="t" style="left:1027.91px;top:813.30px;font-size:17.6px;color:#b2b2b2;transform:scaleX(0.9890);transform-origin:right center;">—</span>
<span class="t" style="left:1530.71px;top:813.30px;font-size:17.6px;color:#b2b2b2;transform:scaleX(0.9890);transform-origin:right center;">—</span>
<span class="t" style="left:1293.66px;top:813.81px;font-size:17px;color:#11499e;transform:scaleX(1.0833);transform-origin:right center;">3</span>
<span class="t" style="left:1418.29px;top:814.00px;font-size:17.6px;color:#b0b0b0;transform:scaleX(1.1202);transform-origin:right center;">0</span>
<span class="t" style="left:84.16px;top:880.00px;font-size:17.6px;color:#11499e;transform:scaleX(1.0666);transform-origin:left center;">mejor traductor</span>
<span class="t" style="left:376.50px;top:880.00px;font-size:17.6px;color:#333333;">2</span>
<span class="t" style="left:451.63px;top:880.00px;font-size:17.6px;color:#333333;transform:scaleX(1.0543);transform-origin:right center;">2.3K</span>
<span class="t" style="left:509.21px;top:880.00px;font-size:17.6px;color:#333333;">29</span>
<span class="t" style="left:557.11px;top:880.00px;font-size:17.6px;color:#333333;transform:scaleX(1.0868);transform-origin:right center;">0.06</span>
<span class="t" style="left:622.08px;top:880.00px;font-size:17.6px;color:#333333;transform:scaleX(0.9085);transform-origin:left center;">SERP</span>
<span class="t" style="left:797.91px;top:879.30px;font-size:17.6px;color:#b2b2b2;transform:scaleX(0.9890);transform-origin:right center;">—</span>
<span class="t" style="left:1027.91px;top:879.30px;font-size:17.6px;color:#b2b2b2;transform:scaleX(0.9890);transform-origin:right center;">—</span>
<span class="t" style="left:1530.71px;top:879.30px;font-size:17.6px;color:#b2b2b2;transform:scaleX(0.9890);transform-origin:right center;">—</span>
<span class="t" style="left:1293.66px;top:879.81px;font-size:17px;color:#11499e;transform:scaleX(1.0833);transform-origin:right center;">3</span>
<span class="t" style="left:1418.29px;top:880.00px;font-size:17.6px;color:#b0b0b0;transform:scaleX(1.1202);transform-origin:right center;">0</span>
<span class="t" style="left:84.17px;top:924.00px;font-size:17.6px;color:#11499e;transform:scaleX(1.0505);transform-origin:left center;">videollamadas</span>
<span class="t" style="left:376.50px;top:924.00px;font-size:17.6px;color:#333333;">2</span>
<span class="t" style="left:451.64px;top:924.00px;font-size:17.6px;color:#333333;transform:scaleX(1.0688);transform-origin:right center;">2.0K</span>
<span class="t" style="left:509.21px;top:924.00px;font-size:17.6px;color:#333333;">51</span>
<span class="t" style="left:557.11px;top:924.00px;font-size:17.6px;color:#333333;transform:scaleX(1.0868);transform-origin:right center;">0.23</span>
<span class="t" style="left:622.08px;top:924.00px;font-size:17.6px;color:#333333;transform:scaleX(0.9085);transform-origin:left center;">SERP</span>
<span class="t" style="left:797.91px;top:923.30px;font-size:17.6px;color:#b2b2b2;transform:scaleX(0.9890);transform-origin:right center;">—</span>
<span class="t" style="left:1027.91px;top:923.30px;font-size:17.6px;color:#b2b2b2;transform:scaleX(0.9890);transform-origin:right center;">—</span>
<span class="t" style="left:1530.71px;top:923.30px;font-size:17.6px;color:#b2b2b2;transform:scaleX(0.9890);transform-origin:right center;">—</span>
<span class="t" style="left:1293.66px;top:923.81px;font-size:17px;color:#11499e;transform:scaleX(1.0833);transform-origin:right center;">6</span>
<span class="t" style="left:1418.29px;top:924.00px;font-size:17.6px;color:#b0b0b0;transform:scaleX(1.1202);transform-origin:right center;">0</span>
<span class="t" style="left:84.16px;top:968.00px;font-size:17.6px;color:#11499e;transform:scaleX(1.0596);transform-origin:left center;">como descargar</span>
<span class="t" style="left:84.16px;top:990.00px;font-size:17.6px;color:#11499e;transform:scaleX(1.0619);transform-origin:left center;">musica</span>
<span class="t" style="left:376.50px;top:968.00px;font-size:17.6px;color:#333333;">4</span>
<span class="t" style="left:451.56px;top:968.00px;font-size:17.6px;color:#333333;transform:scaleX(0.9677);transform-origin:right center;">1.9K</span>
<span class="t" style="left:509.21px;top:968.00px;font-size:17.6px;color:#333333;">24</span>
<span class="t" style="left:557.11px;top:968.00px;font-size:17.6px;color:#333333;transform:scaleX(1.0868);transform-origin:right center;">0.05</span>
<span class="t" style="left:622.08px;top:968.00px;font-size:17.6px;color:#333333;transform:scaleX(0.9085);transform-origin:left center;">SERP</span>
<span class="t" style="left:797.91px;top:967.30px;font-size:17.6px;color:#b2b2b2;transform:scaleX(0.9890);transform-origin:right center;">—</span>
<span class="t" style="left:1027.91px;top:967.30px;font-size:17.6px;color:#b2b2b2;transform:scaleX(0.9890);transform-origin:right center;">—</span>
<span class="t" style="left:1530.71px;top:967.30px;font-size:17.6px;color:#b2b2b2;transform:scaleX(0.9890);transform-origin:right center;">—</span>
<span class="t" style="left:1295.50px;top:967.81px;font-size:17px;color:#11499e;">1</span>
<span class="t" style="left:1408.50px;top:968.00px;font-size:17.6px;color:#333333;transform:scaleX(1.1115);transform-origin:right center;">51</span>
<span class="t" style="left:84.17px;top:1034.00px;font-size:17.6px;color:#11499e;transform:scaleX(1.0519);transform-origin:left center;">datos moviles</span>
<span class="t" style="left:451.55px;top:1034.00px;font-size:17.6px;color:#333333;transform:scaleX(0.9532);transform-origin:right center;">1.5K</span>
<span class="t" style="left:514.10px;top:1034.00px;font-size:17.6px;color:#333333;">0</span>
<span class="t" style="left:557.00px;top:1034.00px;font-size:17.6px;color:#333333;transform:scaleX(0.9490);transform-origin:right center;">1.03</span>
<span class="t" style="left:622.08px;top:1034.00px;font-size:17.6px;color:#333333;transform:scaleX(0.9085);transform-origin:left center;">SERP</span>
<span class="t" style="left:797.91px;top:1033.30px;font-size:17.6px;color:#b2b2b2;transform:scaleX(0.9890);transform-origin:right center;">—</span>
<span class="t" style="left:1027.91px;top:1033.30px;font-size:17.6px;color:#b2b2b2;transform:scaleX(0.9890);transform-origin:right center;">—</span>
<span class="t" style="left:1530.71px;top:1033.30px;font-size:17.6px;color:#b2b2b2;transform:scaleX(0.9890);transform-origin:right center;">—</span>
<span class="t" style="left:1300.61px;top:1033.30px;font-size:17.6px;color:#b2b2b2;transform:scaleX(0.9890);transform-origin:right center;">—</span>
<span class="t" style="left:622.08px;top:1078.00px;font-size:17.6px;color:#333333;transform:scaleX(0.9085);transform-origin:left center;">SERP</span>
<span class="t" style="left:797.91px;top:1077.30px;font-size:17.6px;color:#b2b2b2;transform:scaleX(0.9890);transform-origin:right center;">—</span>
<span class="t" style="left:1027.91px;top:1077.30px;font-size:17.6px;color:#b2b2b2;transform:scaleX(0.9890);transform-origin:right center;">—</span>
<span class="t" style="left:1530.71px;top:1077.30px;font-size:17.6px;color:#b2b2b2;transform:scaleX(0.9890);transform-origin:right center;">—</span>
</div></body></html>
